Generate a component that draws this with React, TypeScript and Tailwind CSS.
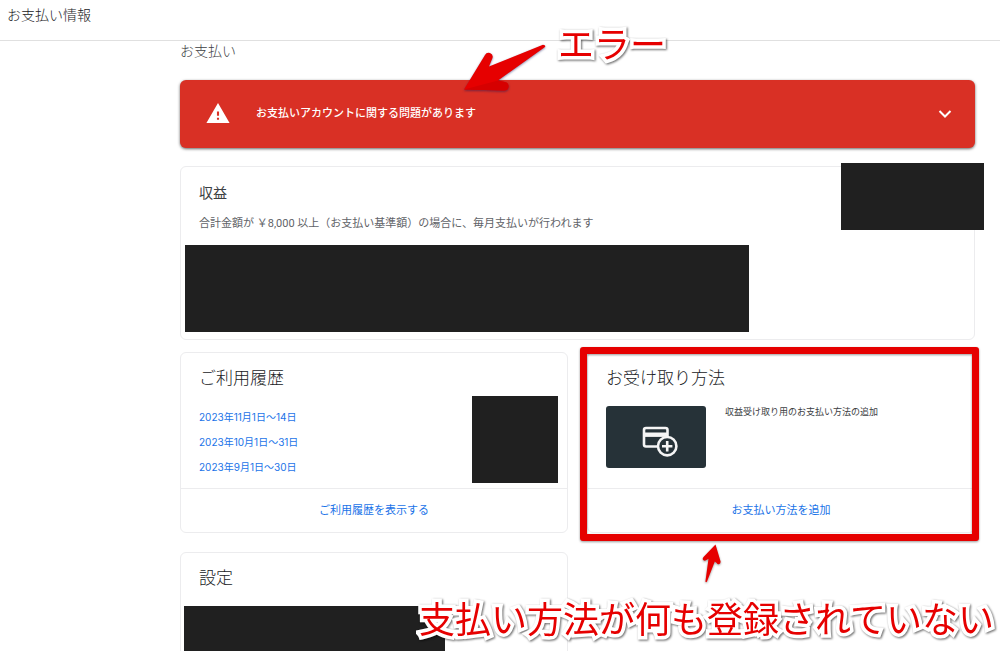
import type { ReactNode } from 'react';

const periods = ['2023年11月1日〜14日', '2023年10月1日〜31日', '2023年9月1日〜30日'];

function Card({ title, children }: { title: string; children: ReactNode }) {
  return (
    <section className="relative rounded-md border border-[#ececee] pt-[13px]">
      <h2 className="px-[18px] text-[17px] leading-6 font-light text-[#202124]">{title}</h2>
      {children}
    </section>
  );
}

function CardFooter({ label }: { label: string }) {
  return (
    <div className="flex h-[44px] items-center justify-center border-t border-[#ececee]">
      <a href="#" className="text-[11px] leading-4 text-[#1a73e8]">
        {label}
      </a>
    </div>
  );
}

function Redacted({ className }: { className: string }) {
  return <div aria-hidden="true" className={`bg-[#202020] ${className}`} />;
}

function Callout({ className, children }: { className: string; children: ReactNode }) {
  return (
    <p
      className={`absolute whitespace-nowrap text-[36px] leading-[52px] text-[#e60000] [-webkit-text-stroke:7px_white] [paint-order:stroke_fill] drop-shadow-[1px_1px_1px_rgba(0,0,0,0.6)] ${className}`}
    >
      {children}
    </p>
  );
}

export default function App() {
  return (
    <div className="relative h-screen overflow-hidden bg-white font-['Roboto','Noto_Sans_CJK_JP',sans-serif]">
      <header className="flex h-[41px] items-start border-b border-[#e0e0e0] px-[7px] pt-[5px]">
        <span className="text-[14px] leading-5 font-light text-[#202124]">お支払い情報</span>
      </header>

      <main className="pr-[25px] pl-[180px]">
        <h1 className="text-[14px] leading-5 font-light text-[#3c4043]">お支払い</h1>

        <button
          type="button"
          className="mt-[19px] flex h-[68px] w-full items-center rounded-md bg-[#d93025] pr-[24px] pl-[26px] text-white shadow-[0_1px_3px_rgba(0,0,0,0.6)]"
        >
          <svg viewBox="1 2 22 19" className="mb-[3px] h-[20px] w-[24px]" fill="currentColor" aria-hidden="true">
            <path d="M1 21h22L12 2 1 21zm12-3h-2v-2h2v2zm0-4h-2v-4h2v4z" />
          </svg>
          <span className="ml-[26px] text-[11px] leading-4 font-medium">
            お支払いアカウントに関する問題があります
          </span>
          <svg
            viewBox="0 0 12 8"
            className="ml-auto h-[8px] w-[12px] overflow-visible"
            fill="none"
            stroke="currentColor"
            strokeWidth="2"
            aria-hidden="true"
          >
            <path d="M0.5 1 6 6.5 11.5 1" />
          </svg>
        </button>

        <section className="relative mt-[18px] rounded-md border border-[#ececee] pt-[16px] pb-[7px]">
          <h2 className="px-[18px] text-[14px] leading-5 text-[#3c4043]">収益</h2>
          <p className="mt-[13px] px-[18px] text-[11px] leading-4 text-[#5f6368]">
            合計金額が ￥8,000 以上（お支払い基準額）の場合に、毎月支払いが行われます
          </p>
          <Redacted className="mt-[13px] mr-[225px] ml-[4px] h-[87px]" />
          <Redacted className="absolute -top-[4px] -right-[10px] h-[67px] w-[143px]" />
        </section>

        <div className="mt-[12px] grid grid-cols-2 gap-x-[19px] gap-y-[19px]">
          <Card title="ご利用履歴">
            <div className="flex h-[98px] justify-between pr-[9px] pl-[18px]">
              <ul className="mt-[15px] font-['Inter','Noto_Sans_CJK_JP',sans-serif] text-[10px] leading-[25px] text-[#1a73e8]">
                {periods.map((period) => (
                  <li key={period}>
                    <a href="#">{period}</a>
                  </li>
                ))}
              </ul>
              <Redacted className="mt-[6px] h-[87px] w-[86px]" />
            </div>
            <CardFooter label="ご利用履歴を表示する" />
          </Card>

          <Card title="お受け取り方法">
            <div className="flex h-[98px] items-start gap-[19px] px-[18px] pt-[16px]">
              <div className="flex h-[62px] w-[100px] items-center justify-center rounded-[3px] bg-[#263238]">
                <svg
                  viewBox="0 0 36 31"
                  className="mt-[8px] ml-[8px] h-[31px] w-[36px]"
                  fill="none"
                  stroke="#f5f5f5"
                  strokeWidth="2.6"
                  aria-hidden="true"
                >
                  <path d="M15 20.5H4Q2 20.5 2 18.500V4Q2 2 4 2H23.500Q25.500 2 25.500 4V11" />
                  <path d="M2 8.700H25.500" strokeWidth="4.400" />
                  <circle cx="25.200" cy="20.200" r="9.200" fill="#263238" strokeWidth="2.600" />
                  <path d="M25.200 15V25.400M20 20.200H30.400" strokeWidth="2.600" />
                </svg>
              </div>
              <p className="text-[9px] leading-3 text-[#3c4043]">収益受け取り用のお支払い方法の追加</p>
            </div>
            <CardFooter label="お支払い方法を追加" />
            <div
              aria-hidden="true"
              className="absolute -top-[6px] -right-[5px] -bottom-[9px] -left-[8px] rounded-[3px] border-[7px] border-[#e60000] drop-shadow-[0_1px_1px_rgba(0,0,0,0.4)]"
            />
          </Card>

          <Card title="設定">
            <Redacted className="mt-[16px] ml-[3px] h-[87px] w-[261px]" />
          </Card>
        </div>
      </main>

      <svg
        viewBox="0 0 84 48"
        className="absolute top-[44px] left-[463px] h-[48px] w-[84px] drop-shadow-[0_1px_1px_rgba(20,20,90,0.5)]"
        aria-hidden="true"
      >
        <path
          d="M1 45.500 22 11Q23.500 8 27 9Q30.500 10.500 29.500 14L26 22.500 80 0.800Q83 1 82 3L35 36.500 42 38Q46 39 45.500 43Q45 46.500 41 46.500Z"
          fill="#e60000"
        />
        <path d="M1 45.500 35 36.500 42 38Q46 39 45.500 43Q45 46.500 41 46.500Z" fill="#d60000" />
      </svg>
      <svg
        viewBox="0 0 20 40"
        className="absolute top-[544px] left-[702px] h-[40px] w-[20px] drop-shadow-[0_1px_1px_rgba(0,0,0,0.4)]"
        aria-hidden="true"
      >
        <path
          d="M13.500 0.500 18.600 17.500Q18.800 19.800 17 20.300Q15.300 20.500 14.700 19L12.800 17.500 5 37.500Q4 39 3.400 37.500L6.500 14.800 3.500 16.500Q1.500 17 0.800 15.500Q0.400 14 1.500 13Z"
          fill="#e60000"
        />
      </svg>
      <Callout className="top-[20px] left-[558px]">エラー</Callout>
      <Callout className="right-[6px] bottom-[4px]">支払い方法が何も登録されていない</Callout>
    </div>
  );
}
